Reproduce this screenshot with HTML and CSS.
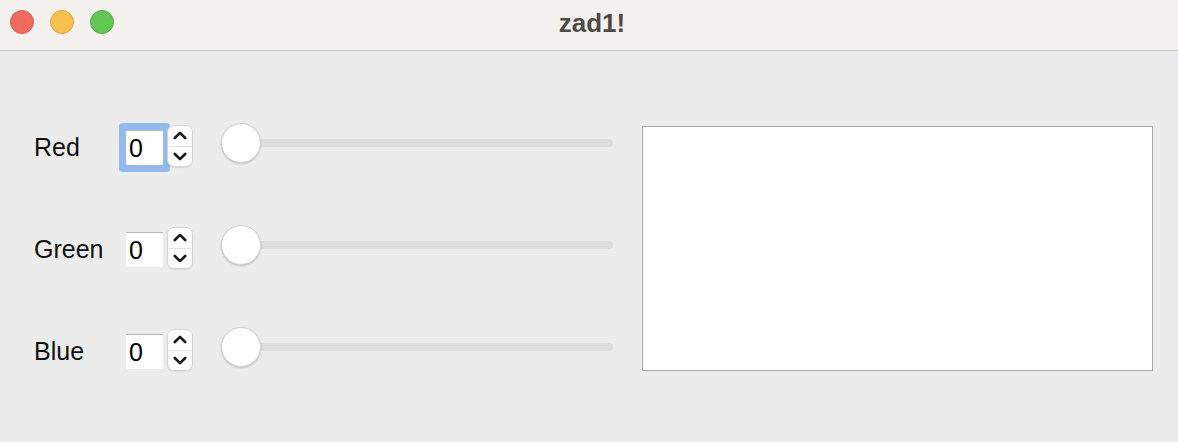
FILE: index.html
```html
<!DOCTYPE html>
<html>
<head>
<meta charset="utf-8">
<link rel="stylesheet" href="styles.css">
</head>
<body>
<div class="window">
  <div class="titlebar">
    <div class="lights">
      <span class="light red"></span>
      <span class="light yellow"></span>
      <span class="light green"></span>
    </div>
    <div class="title">zad1!</div>
  </div>
  <div class="content">
    <div class="controls">
      <div class="row">
        <span class="label">Red</span>
        <span class="field focused">0</span>
        <span class="stepper">
          <span class="step"><svg width="14" height="9" viewBox="0 0 14 9"><path d="M1.8 7 L7 1.8 L12.2 7" fill="none" stroke="#1a1a1a" stroke-width="2.6" stroke-linecap="round" stroke-linejoin="round"/></svg></span>
          <span class="step"><svg width="14" height="9" viewBox="0 0 14 9"><path d="M1.8 2 L7 7.2 L12.2 2" fill="none" stroke="#1a1a1a" stroke-width="2.6" stroke-linecap="round" stroke-linejoin="round"/></svg></span>
        </span>
        <span class="slider"><span class="track"></span><span class="thumb"></span></span>
      </div>
      <div class="row">
        <span class="label">Green</span>
        <span class="field">0</span>
        <span class="stepper">
          <span class="step"><svg width="14" height="9" viewBox="0 0 14 9"><path d="M1.8 7 L7 1.8 L12.2 7" fill="none" stroke="#1a1a1a" stroke-width="2.6" stroke-linecap="round" stroke-linejoin="round"/></svg></span>
          <span class="step"><svg width="14" height="9" viewBox="0 0 14 9"><path d="M1.8 2 L7 7.2 L12.2 2" fill="none" stroke="#1a1a1a" stroke-width="2.6" stroke-linecap="round" stroke-linejoin="round"/></svg></span>
        </span>
        <span class="slider"><span class="track"></span><span class="thumb"></span></span>
      </div>
      <div class="row">
        <span class="label">Blue</span>
        <span class="field">0</span>
        <span class="stepper">
          <span class="step"><svg width="14" height="9" viewBox="0 0 14 9"><path d="M1.8 7 L7 1.8 L12.2 7" fill="none" stroke="#1a1a1a" stroke-width="2.6" stroke-linecap="round" stroke-linejoin="round"/></svg></span>
          <span class="step"><svg width="14" height="9" viewBox="0 0 14 9"><path d="M1.8 2 L7 7.2 L12.2 2" fill="none" stroke="#1a1a1a" stroke-width="2.6" stroke-linecap="round" stroke-linejoin="round"/></svg></span>
        </span>
        <span class="slider"><span class="track"></span><span class="thumb"></span></span>
      </div>
    </div>
    <div class="preview"></div>
  </div>
</div>
</body>
</html>
```

FILE: styles.css
```css
html, body {
  margin: 0;
  padding: 0;
}
body {
  width: 1178px;
  height: 442px;
  overflow: hidden;
  background: #ececec;
  font-family: "Liberation Sans", Arial, sans-serif;
}
.window {
  display: flex;
  flex-direction: column;
  height: 442px;
}
.titlebar {
  position: relative;
  height: 50px;
  background: #f4f0ed;
  border-bottom: 1px solid #c9c7c6;
  display: flex;
  align-items: center;
  justify-content: center;
}
.lights {
  position: absolute;
  left: 10px;
  top: 10px;
  display: flex;
  gap: 16px;
}
.light {
  width: 24px;
  height: 24px;
  border-radius: 50%;
  box-sizing: border-box;
}
.light.red { background: #ef6b5f; border: 1px solid #dd5a50; }
.light.yellow { background: #f7bf50; border: 1px solid #e0a73c; }
.light.green { background: #62c655; border: 1px solid #52ad45; }
.title {
  font-weight: bold;
  font-size: 26px;
  color: #4c4a49;
  margin-left: 6px;
  margin-top: -4px;
}
.content {
  display: flex;
  padding: 44px 0 0 34px;
}
.controls {
  display: flex;
  flex-direction: column;
  width: 580px;
}
.row {
  height: 102px;
  display: flex;
  align-items: center;
}
.label {
  width: 92px;
  font-size: 25px;
  color: #111;
  margin-top: 3px;
}
.field {
  width: 37px;
  height: 35px;
  box-sizing: border-box;
  background: #fff;
  border-top: 1px solid #b9b9b9;
  font-size: 25px;
  color: #000;
  padding-left: 3px;
  line-height: 34px;
  margin-top: 2px;
}
.field.focused {
  box-shadow: 0 0 0 7px #94b9ee;
  border-radius: 1px;
}
.stepper {
  width: 26px;
  height: 42px;
  box-sizing: border-box;
  margin-left: 4px;
  background: #fff;
  border-radius: 7px;
  border: 1px solid #d4d4d4;
  box-shadow: 0 1px 1px rgba(0,0,0,0.08);
  display: flex;
  flex-direction: column;
  position: relative;
  z-index: 1;
}
.step {
  flex: 1;
  display: flex;
  align-items: center;
  justify-content: center;
}
.step:first-child {
  border-bottom: 1px solid #e2e2e2;
}
.slider {
  position: relative;
  width: 392px;
  height: 40px;
  margin-left: 28px;
  margin-bottom: 6px;
  display: flex;
  align-items: center;
}
.track {
  width: 392px;
  height: 8px;
  border-radius: 4px;
  background: #dcdcdc;
}
.thumb {
  position: absolute;
  left: 0;
  top: 0;
  width: 40px;
  height: 40px;
  box-sizing: border-box;
  border-radius: 50%;
  background: #fff;
  border: 1px solid #cfcfcf;
  box-shadow: 0 1px 2px rgba(0,0,0,0.18);
}
.preview {
  width: 511px;
  height: 245px;
  box-sizing: border-box;
  margin-top: 31px;
  margin-left: 28px;
  background: #fff;
  border: 1px solid #a9a9a9;
}
```
